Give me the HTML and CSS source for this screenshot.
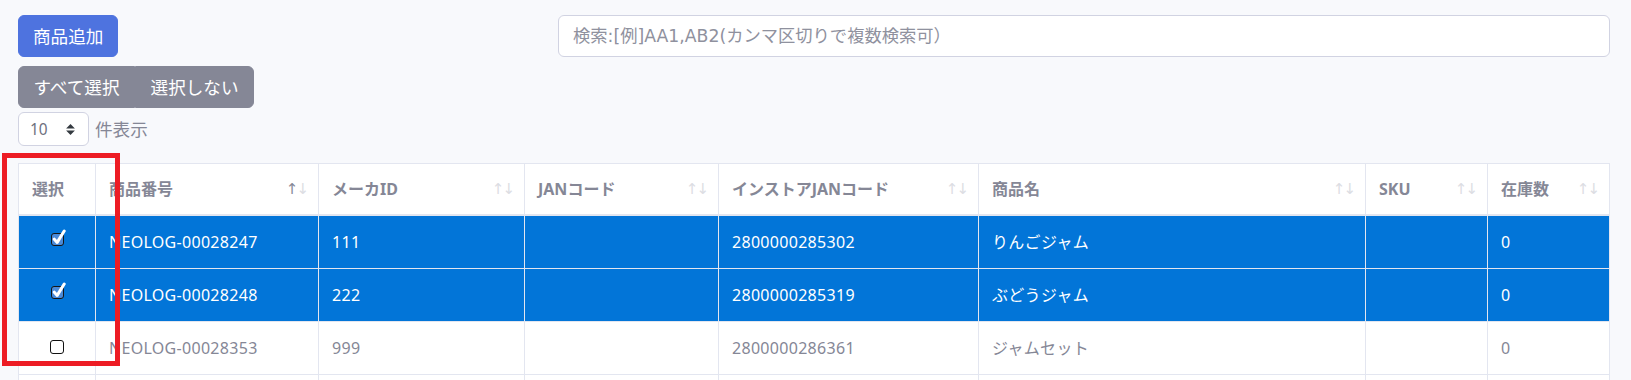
FILE: index.html
```html
<!DOCTYPE html>
<html>
    <head>
        <meta charset="utf-8">
        <title>商品一覧</title>
        <link rel="stylesheet" href="styles.css">
    </head>
    <body>
        <div class="page">
            <div class="top-row">
                <div>
                    <button class="btn btn-primary" type="button">商品追加</button>
                </div>
                <input class="search" type="text" placeholder="検索:[例]AA1,AB2(カンマ区切りで複数検索可）">
            </div>
            <div class="btn-group">
                <button class="btn btn-secondary" type="button">すべて選択</button>
                <button class="btn btn-secondary" type="button">選択しない</button>
            </div>
            <div class="length">
                <select class="length-select">
                    <option>10</option>
                    <option>25</option>
                    <option>50</option>
                </select>
                <span>件表示</span>
            </div>

            <div class="table-wrap">
                <table class="data-table">
                    <colgroup>
                        <col style="width:77px">
                        <col style="width:223px">
                        <col style="width:206px">
                        <col style="width:194px">
                        <col style="width:260px">
                        <col style="width:387px">
                        <col style="width:122px">
                        <col>
                    </colgroup>
                    <thead>
                        <tr>
                            <th>選択</th>
                            <th><div class="th-in">商品番号<span class="sort"><span class="on">↑</span>↓</span></div></th>
                            <th><div class="th-in">メーカID<span class="sort">↑↓</span></div></th>
                            <th><div class="th-in">JANコード<span class="sort">↑↓</span></div></th>
                            <th><div class="th-in">インストアJANコード<span class="sort">↑↓</span></div></th>
                            <th><div class="th-in">商品名<span class="sort">↑↓</span></div></th>
                            <th><div class="th-in">SKU<span class="sort">↑↓</span></div></th>
                            <th><div class="th-in">在庫数<span class="sort">↑↓</span></div></th>
                        </tr>
                    </thead>
                    <tbody>
                        <tr class="selected">
                            <td class="check-cell"><input type="checkbox" class="row-check" checked></td>
                            <td>NEOLOG-00028247</td>
                            <td>111</td>
                            <td></td>
                            <td>2800000285302</td>
                            <td>りんごジャム</td>
                            <td></td>
                            <td>0</td>
                        </tr>
                        <tr class="selected">
                            <td class="check-cell"><input type="checkbox" class="row-check" checked></td>
                            <td>NEOLOG-00028248</td>
                            <td>222</td>
                            <td></td>
                            <td>2800000285319</td>
                            <td>ぶどうジャム</td>
                            <td></td>
                            <td>0</td>
                        </tr>
                        <tr>
                            <td class="check-cell"><input type="checkbox" class="row-check"></td>
                            <td>NEOLOG-00028353</td>
                            <td>999</td>
                            <td></td>
                            <td>2800000286361</td>
                            <td>ジャムセット</td>
                            <td></td>
                            <td>0</td>
                        </tr>
                        <tr>
                            <td class="check-cell">&nbsp;</td>
                            <td></td><td></td><td></td><td></td><td></td><td></td><td></td>
                        </tr>
                    </tbody>
                </table>
                <div class="highlight-box"></div>
            </div>
        </div>
    </body>
</html>
```

FILE: styles.css
```css
html, body {
    height: 100%;
    overflow: hidden;
}

body {
    margin: 0;
    padding: 0;
    background: #f8f9fc;
    color: #858796;
    font-family: "Noto Sans", "Noto Sans CJK JP", sans-serif;
    font-size: 17.6px;
    line-height: 1.5;
}

.page {
    padding: 15px 21px 0 18px;
}

.top-row {
    display: grid;
    grid-template-columns: 540px 1fr;
}

.btn {
    font-family: inherit;
    font-size: 17.6px;
    line-height: 26px;
    padding: 7px 14px;
    border: 1px solid transparent;
    border-radius: 6px;
    color: #fff;
    cursor: pointer;
}

.btn-primary {
    background: #4e73df;
    border-color: #4e73df;
}

.btn-secondary {
    background: #858796;
    border-color: #858796;
    padding: 7px 14.5px;
}

.search {
    height: 42px;
    box-sizing: border-box;
    padding: 0 14px;
    border: 1px solid #d1d3e2;
    border-radius: 6px;
    background: #fff;
    font-family: "DejaVu Sans", "Noto Sans CJK JP", sans-serif;
    font-size: 17.3px;
    color: #6e707e;
}
.search::placeholder {
    color: #8f919e;
}

.btn-group {
    display: flex;
    margin-top: 9px;
}
.btn-group .btn {
    border-radius: 0;
}
.btn-group .btn:first-child {
    border-radius: 6px 0 0 6px;
}
.btn-group .btn:last-child {
    border-radius: 0 6px 6px 0;
}

.length {
    display: flex;
    align-items: center;
    gap: 6px;
    margin-top: 4px;
}

.length-select {
    -webkit-appearance: none;
    appearance: none;
    width: 71px;
    height: 34px;
    padding: 0 11px;
    border: 1px solid #d1d3e2;
    border-radius: 6px;
    background: #fff url("data:image/svg+xml,%3csvg xmlns='http://www.w3.org/2000/svg' width='4' height='5' viewBox='0 0 4 5'%3e%3cpath fill='%23343a40' d='M2 0L0 2h4zm0 5L0 3h4z'/%3e%3c/svg%3e") no-repeat right 13px center / 9px 11px;
    font-family: inherit;
    font-size: 15.4px;
    color: #6e707e;
}

.table-wrap {
    position: relative;
    margin-top: 17px;
}

.data-table {
    width: 100%;
    table-layout: fixed;
    border-collapse: collapse;
    background: #fff;
    border: 1px solid #e3e6f0;
    font-size: 16px;
}

.data-table th,
.data-table td {
    border: 1px solid #e3e6f0;
    text-align: left;
    vertical-align: top;
    white-space: nowrap;
    overflow: hidden;
}

.data-table th {
    padding: 12px 9px 12px 13px;
    line-height: 26px;
    font-weight: bold;
    border-bottom: 2px solid #e3e6f0;
}

.th-in {
    display: flex;
    justify-content: space-between;
    align-items: center;
}

.sort {
    font-family: "DejaVu Sans", sans-serif;
    font-size: 15px;
    font-weight: normal;
    letter-spacing: -2px;
    padding-right: 2px;
    color: #dcdde3;
}
.sort .on {
    color: #858796;
}

.data-table td {
    padding: 13px 13px;
    line-height: 26px;
    letter-spacing: 0.3px;
}

.data-table tr.selected td {
    background: #0275d8;
    color: #fff;
}

.check-cell {
    text-align: center !important;
}

.row-check {
    -webkit-appearance: none;
    appearance: none;
    display: block;
    width: 14px;
    height: 14px;
    margin: 5px auto 0;
    border: 1px solid #111;
    border-radius: 3px;
    background: #fff;
}

.row-check:checked {
    width: 17px;
    height: 17px;
    margin-top: 0;
    border: 0;
    border-radius: 0;
    background: url("data:image/svg+xml,%3csvg xmlns='http://www.w3.org/2000/svg' width='17' height='17' viewBox='0 0 17 17'%3e%3crect x='1.5' y='4.5' width='12' height='12' rx='2.5' fill='%234a8ad8' stroke='%23151515'/%3e%3cpath d='M4.3 10.2 L7.2 13.4 L14.2 2' fill='none' stroke='%23fff' stroke-width='3' stroke-linecap='round' stroke-linejoin='round'/%3e%3c/svg%3e") no-repeat center / 17px 17px;
    position: relative;
    left: 1px;
}

.highlight-box {
    position: absolute;
    left: -16px;
    top: -10px;
    width: 108px;
    height: 203px;
    border: 5px solid #ed1c24;
    pointer-events: none;
}
```
